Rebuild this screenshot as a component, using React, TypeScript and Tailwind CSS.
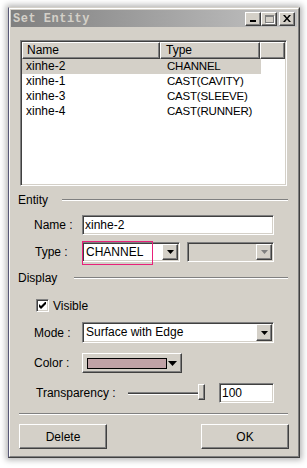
import React from 'react';

const raised =
  'border border-t-white border-l-white border-b-[#404040] border-r-[#404040] shadow-[inset_-1px_-1px_0_#808080]';
const sunken =
  'border border-t-[#808080] border-l-[#808080] border-b-white border-r-white shadow-[inset_1px_1px_0_#404040,inset_-1px_-1px_0_#d4d0c8]';

const Arrow = ({ color = '#000', big }: { color?: string; big?: boolean }) =>
  big ? (
    <svg width="9" height="5" viewBox="0 0 9 5">
      <path d="M0 0h9L4.5 5z" fill={color} />
    </svg>
  ) : (
    <svg width="7" height="4" viewBox="0 0 7 4">
      <path d="M0 0h7L3.5 4z" fill={color} />
    </svg>
  );

const DropButton = ({ disabled }: { disabled?: boolean }) => (
  <div className={`w-[16px] h-full bg-[#d4d0c8] flex items-center justify-center ${raised}`}>
    <Arrow color={disabled ? '#808080' : '#000'} />
  </div>
);

const Combo = ({ text, width, disabled }: { text?: string; width: string; disabled?: boolean }) => (
  <div className={`${width} h-full flex p-[1px] ${disabled ? 'bg-[#d4d0c8]' : 'bg-white'} ${sunken}`}>
    <div className="flex-1 pl-[2px] leading-[17px] truncate">{text}</div>
    <DropButton disabled={disabled} />
  </div>
);

const GroupLabel = ({ text, gap }: { text: string; gap: string }) => (
  <div className="h-[14px] flex items-center">
    <span className="leading-[14px]">{text}</span>
    <div className={`flex-1 ${gap} h-[2px] border-t border-t-[#808080] border-b border-b-white`} />
  </div>
);

const rows = [
  ['xinhe-2', 'CHANNEL'],
  ['xinhe-1', 'CAST(CAVITY)'],
  ['xinhe-3', 'CAST(SLEEVE)'],
  ['xinhe-4', 'CAST(RUNNER)'],
];

export default function App() {
  return (
    <div className="w-[307px] h-[468px] bg-white pl-[8px] pt-[7px] font-['Liberation_Sans',Arial,sans-serif] text-[12px] text-black">
      <div className="w-[292px] h-[451px] border border-t-[#d4d0c8] border-l-[#5a5a78] border-b-[#404040] border-r-[#404040] bg-[#d4d0c8] shadow-[0_0_6px_2px_rgba(0,0,0,0.3)]">
        <div className="h-full border border-t-white border-l-white border-b-[#808080] border-r-[#808080] p-[1px] flex flex-col">
          {/* title bar */}
          <div className="h-[17px] flex items-center bg-gradient-to-r from-[#808080] to-[#c4c4c4] pl-[2px] pr-[2px]">
            <span className="font-['Liberation_Mono',monospace] font-bold text-[12px] text-[#d4d0c8] tracking-[0.5px]">
              Set Entity
            </span>
            <div className="ml-auto flex items-center">
              <div className={`w-[16px] h-[14px] bg-[#d4d0c8] flex items-end pl-[4px] pb-[3px] ${raised}`}>
                <div className="w-[6px] h-[2px] bg-black" />
              </div>
              <div className={`w-[16px] h-[14px] bg-[#d4d0c8] flex items-center justify-center ${raised}`}>
                <div className="w-[9px] h-[8px] border border-[#808080] border-t-2 shadow-[1px_1px_0_white]" />
              </div>
              <div className={`ml-[2px] w-[16px] h-[14px] bg-[#d4d0c8] flex items-center justify-center ${raised}`}>
                <svg width="8" height="7" viewBox="0 0 8 7">
                  <path d="M0 0h2l2 2.5L6 0h2L5 3.5 8 7H6L4 4.5 2 7H0l3-3.5z" fill="#000" />
                </svg>
              </div>
            </div>
          </div>

          {/* content */}
          <div className="flex flex-col pl-[7px] pr-[9px]">
            {/* list */}
            <div className={`ml-[2px] mt-[13px] w-[267px] h-[146px] bg-white p-[1px] ${sunken}`}>
              <div className="flex h-[17px] leading-[15px]">
                <div className={`w-[138px] pl-[4px] bg-[#d4d0c8] ${raised}`}>Name</div>
                <div className={`w-[100px] pl-[5px] bg-[#d4d0c8] ${raised}`}>Type</div>
                <div className={`flex-1 bg-[#d4d0c8] ${raised}`} />
              </div>
              {rows.map(([n, t], i) => (
                <div
                  key={n}
                  className={`flex w-[239px] h-[15px] leading-[15px] ${i === 0 ? 'bg-[#d4d0c8]' : ''}`}
                >
                  <div className="w-[138px] pl-[4px]">{n}</div>
                  <div className="pl-[7px] text-[11.5px] tracking-[-0.2px]">{t}</div>
                </div>
              ))}
            </div>

            {/* Entity */}
            <div className="mt-[7px]">
              <GroupLabel text="Entity" gap="ml-[14px]" />
            </div>
            <div className="mt-[8px] h-[20px] flex items-center pl-[16px]">
              <span className="w-[48px]">Name :</span>
              <div className={`w-[192px] h-full bg-white pl-[2px] leading-[18px] ${sunken}`}>xinhe-2</div>
            </div>
            <div className="mt-[7px] h-[20px] flex items-center pl-[16px]">
              <span className="w-[48px] pl-[1px]">Type :</span>
              <div className="relative h-full">
                <Combo text="CHANNEL" width="w-[98px]" />
                <div className="absolute left-0 top-[-1px] w-[71px] h-[24px] border border-[#e8207a]" />
              </div>
              <div className="ml-[7px] h-full">
                <Combo width="w-[87px]" disabled />
              </div>
            </div>

            {/* Display */}
            <div className="mt-[9px]">
              <GroupLabel text="Display" gap="ml-[17px]" />
            </div>
            <div className="mt-[14px] h-[13px] flex items-center pl-[18px]">
              <div className={`w-[13px] h-[13px] bg-white flex items-center justify-center ${sunken}`}>
                <svg width="7" height="7" viewBox="0 0 7 7">
                  <path d="M0 2v3l2 2 5-5V-1L2 4z" fill="#000" />
                </svg>
              </div>
              <span className="ml-[4px]">Visible</span>
            </div>
            <div className="mt-[10px] h-[21px] flex items-center pl-[16px]">
              <span className="w-[48px]">Mode :</span>
              <Combo text="Surface with Edge" width="w-[192px]" />
            </div>
            <div className="mt-[10px] h-[20px] flex items-center pl-[16px]">
              <span className="w-[48px]">Color :</span>
              <div className={`w-[100px] h-full bg-[#d4d0c8] flex items-center pl-[4px] pr-[4px] ${raised}`}>
                <div className="w-[80px] h-[11px] bg-[#c0a2a6] border border-black" />
                <div className="ml-auto">
                  <Arrow big />
                </div>
              </div>
            </div>
            <div className="mt-[10px] h-[20px] flex items-center pl-[18px]">
              <span className="w-[92px]">Transparency :</span>
              <div className="relative w-[77px] h-full flex items-center">
                <div className="w-full h-[3px] border-t border-t-[#808080] bg-[#404040] border-b border-b-white" />
                <div className={`absolute right-0 top-[1px] w-[7px] h-[16px] bg-[#d4d0c8] ${raised}`} />
              </div>
              <div className={`ml-[14px] w-[55px] h-[20px] bg-white pl-[2px] leading-[18px] ${sunken}`}>100</div>
            </div>

            {/* separator */}
            <div className="mt-[10px] ml-[1px] h-[2px] border-t border-t-[#808080] border-b border-b-white" />

            {/* buttons */}
            <div className="mt-[9px] ml-[1px] w-[270px] flex justify-between">
              <button className={`w-[88px] h-[25px] bg-[#d4d0c8] ${raised}`}>Delete</button>
              <button className={`w-[88px] h-[25px] bg-[#d4d0c8] ${raised}`}>OK</button>
            </div>
          </div>
        </div>
      </div>
    </div>
  );
}
